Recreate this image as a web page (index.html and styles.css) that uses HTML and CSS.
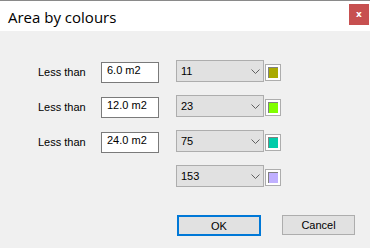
FILE: index.html
```html
<!DOCTYPE html>
<html lang="en">
<head>
  <meta charset="UTF-8">
  <title>Area by colours</title>
  <link rel="stylesheet" href="styles.css">
</head>
<body>
  <div class="dialog">
    <div class="titlebar">
      <span class="title">Area by colours</span>
      <button class="close-button">x</button>
    </div>

    <div class="content">
      <div class="rows">
        <span class="label">Less than</span>
        <input class="area-input" type="text" value="6.0 m2">
        <div class="combo"><span>11</span><svg width="9" height="5" viewBox="0 0 9 5"><polyline points="0.5,0.5 4.5,4.5 8.5,0.5" fill="none" stroke="#606060" stroke-width="1"/></svg></div>
        <div class="swatch"><span style="background:#aaaa00"></span></div>

        <span class="label">Less than</span>
        <input class="area-input" type="text" value="12.0 m2">
        <div class="combo"><span>23</span><svg width="9" height="5" viewBox="0 0 9 5"><polyline points="0.5,0.5 4.5,4.5 8.5,0.5" fill="none" stroke="#606060" stroke-width="1"/></svg></div>
        <div class="swatch"><span style="background:#80ff00"></span></div>

        <span class="label">Less than</span>
        <input class="area-input" type="text" value="24.0 m2">
        <div class="combo"><span>75</span><svg width="9" height="5" viewBox="0 0 9 5"><polyline points="0.5,0.5 4.5,4.5 8.5,0.5" fill="none" stroke="#606060" stroke-width="1"/></svg></div>
        <div class="swatch"><span style="background:#00ccaa"></span></div>

        <span></span>
        <span></span>
        <div class="combo"><span>153</span><svg width="9" height="5" viewBox="0 0 9 5"><polyline points="0.5,0.5 4.5,4.5 8.5,0.5" fill="none" stroke="#606060" stroke-width="1"/></svg></div>
        <div class="swatch"><span style="background:#c0b0ff"></span></div>
      </div>

      <div class="buttons">
        <button class="btn btn-ok">OK</button>
        <button class="btn btn-cancel">Cancel</button>
      </div>
    </div>
  </div>
</body>
</html>
```

FILE: styles.css
```css
:root {
  --face-color: #f0f0f0;
  --control-color: #e1e1e1;
  --control-border: #adadad;
  --focus-color: #0078d7;
}

body {
  margin: 0;
  font-family: 'Liberation Sans', Arial, sans-serif;
  font-size: 11px;
  color: #000;
}

.dialog {
  width: 370px;
  height: 248px;
  background-color: var(--face-color);
  overflow: hidden;
}

.titlebar {
  height: 30px;
  border-top: 1px solid #8a8a8a;
  background-color: #fff;
  display: flex;
  align-items: center;
  padding-left: 8px;
}

.title {
  font-family: 'Open Sans', 'Noto Sans', sans-serif;
  font-size: 15px;
  color: #000;
  margin-top: 1px;
}

.close-button {
  margin-left: auto;
  margin-right: 1px;
  margin-top: -4px;
  width: 20px;
  height: 21px;
  border: none;
  padding: 0;
  background-color: #c75050;
  color: #fff;
  font-family: 'DejaVu Sans', sans-serif;
  font-weight: bold;
  font-size: 9px;
  line-height: 21px;
}

.content {
  padding: 29px 0 0 38px;
}

.rows {
  display: grid;
  grid-template-columns: 63px 75px 89px 16px;
  grid-auto-rows: 22px;
  row-gap: 13px;
  align-items: center;
}

.label {
  padding-top: 2px;
}

.area-input {
  width: 58px;
  height: 21px;
  box-sizing: border-box;
  margin: 2px 0 0 0;
  padding: 0 0 5px 5px;
  border: 1px solid #7a7a7a;
  background-color: #fff;
  font-family: 'Liberation Sans', Arial, sans-serif;
  font-size: 11px;
  outline: none;
}

.combo {
  width: 88px;
  height: 22px;
  box-sizing: border-box;
  border: 1px solid var(--control-border);
  background-color: var(--control-color);
  display: flex;
  align-items: center;
  justify-content: space-between;
  padding: 0 3px 0 4px;
}

.combo svg {
  display: block;
}

.swatch {
  width: 16px;
  height: 17px;
  box-sizing: border-box;
  border: 1px solid var(--control-border);
  background-color: #fff;
  padding: 2px;
  margin-top: 2px;
}

.swatch span {
  display: block;
  width: 10px;
  height: 11px;
  box-sizing: border-box;
  border-top: 1px solid #808080;
  border-left: 1px solid #808080;
}

.buttons {
  display: flex;
  align-items: flex-start;
  margin: 28px 0 0 139px;
  gap: 21px;
}

.btn {
  height: 21px;
  box-sizing: border-box;
  background-color: var(--control-color);
  border: 1px solid var(--control-border);
  font-family: 'Liberation Sans', Arial, sans-serif;
  font-size: 11px;
  color: #000;
  padding: 0;
}

.btn-ok {
  width: 84px;
  border: 2px solid var(--focus-color);
}

.btn-cancel {
  width: 73px;
  height: 20px;
}
```
